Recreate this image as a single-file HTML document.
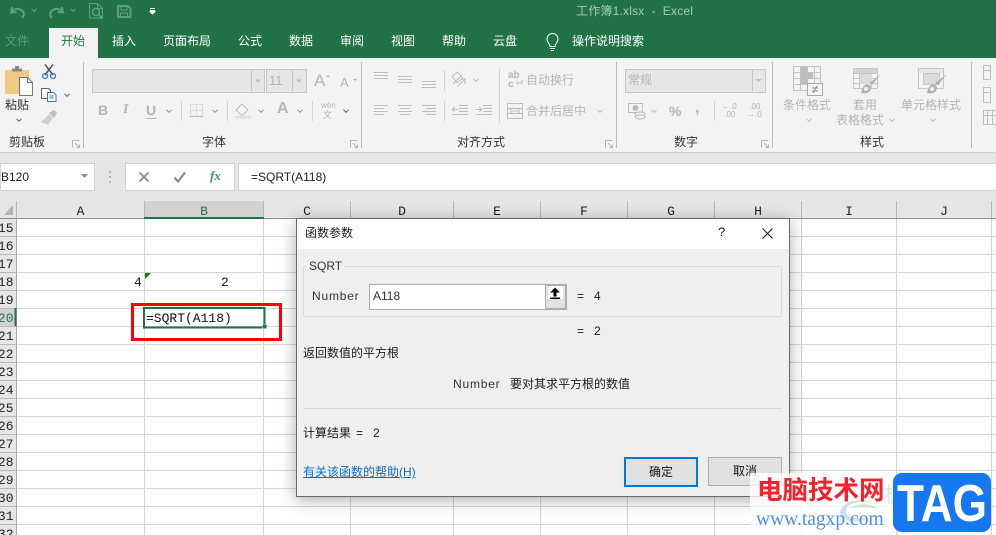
<!DOCTYPE html>
<html lang="zh"><head><meta charset="utf-8"><title>工作簿1.xlsx - Excel</title>
<style>
html,body{margin:0;padding:0;background:#fff}
#p{position:relative;width:996px;height:535px;overflow:hidden;background:#fff;font:12px/16px "Liberation Sans","Noto Sans CJK SC",sans-serif;color:#222}
#p div{position:absolute;white-space:nowrap}
.t{color:#fff;top:33px}
.g{color:#b4b4b4}
.k{color:#333}
.m{font-family:"Liberation Mono","Noto Sans CJK SC",monospace;font-size:13px;color:#111}
.h{top:201px;height:17px;line-height:22px;text-align:center;font-family:"Liberation Mono",monospace;font-size:13px;color:#222}
svg{position:absolute;left:0;top:0}
.d{color:#1a1a1a}
</style></head><body><div id="p">

<div style="left:0;top:0;width:996px;height:58px;background:#217346"></div>
<div style="left:49px;top:28px;width:49px;height:30px;background:#f3f3f3"></div>
<div style="left:0;top:58px;width:996px;height:94px;background:#f3f3f3"></div>
<div style="left:0;top:152px;width:996px;height:1px;background:#cfcfcf"></div>
<div style="left:0;top:153px;width:996px;height:48px;background:#e6e6e6"></div>

<div style="left:576px;top:3px;color:#a9c9b7;letter-spacing:.2px">工作簿1.xlsx &nbsp;- &nbsp;Excel</div>
<div class="t" style="left:5px;color:#5b9d7c">文件</div>
<div class="t" style="left:61px;color:#217346">开始</div>
<div class="t" style="left:112px">插入</div>
<div class="t" style="left:163px">页面布局</div>
<div class="t" style="left:238px">公式</div>
<div class="t" style="left:289px">数据</div>
<div class="t" style="left:340px">审阅</div>
<div class="t" style="left:391px">视图</div>
<div class="t" style="left:442px">帮助</div>
<div class="t" style="left:493px">云盘</div>
<div class="t" style="left:572px">操作说明搜索</div>

<div style="left:92px;top:69px;width:171px;height:22px;background:#e6e6e6;border:1px solid #c6c6c6"></div>
<div style="left:266px;top:69px;width:39px;height:22px;background:#e6e6e6;border:1px solid #c6c6c6"></div>
<div style="left:625px;top:69px;width:139px;height:22px;background:#e6e6e6;border:1px solid #c6c6c6"></div>
<div class="g" style="left:269px;top:73px;font-size:13px">11</div>
<div class="g" style="left:628px;top:72px">常规</div>

<div class="k" style="left:5px;top:97px">粘贴</div>
<div class="k" style="left:9px;top:134px">剪贴板</div>
<div class="k" style="left:202px;top:134px">字体</div>
<div class="k" style="left:457px;top:134px">对齐方式</div>
<div class="k" style="left:674px;top:134px">数字</div>
<div class="k" style="left:860px;top:134px">样式</div>
<div class="g" style="left:526px;top:72px">自动换行</div>
<div class="g" style="left:526px;top:103px">合并后居中</div>
<div class="g" style="left:783px;top:97px">条件格式</div>
<div class="g" style="left:853px;top:97px">套用</div>
<div class="g" style="left:836px;top:112px">表格格式</div>
<div class="g" style="left:901px;top:97px">单元格样式</div>
<div class="g" style="left:98px;top:102px;font-size:14px;font-weight:bold">B</div>
<div class="g" style="left:123px;top:102px;font-size:14px;font-weight:bold;font-style:italic;font-family:'Liberation Serif',serif">I</div>
<div class="g" style="left:146px;top:102px;font-size:14px;font-weight:bold">U</div>
<div class="g" style="left:277px;top:101px;font-size:16px;font-weight:bold">A</div>
<div class="g" style="left:314px;top:73px;font-size:17px">A</div>
<div class="g" style="left:340px;top:75px;font-size:13px">A</div>
<div class="g" style="left:321px;top:101px;font-size:8px;line-height:9px">wén</div>
<div class="g" style="left:323px;top:110px;font-size:9px;line-height:10px">文</div>
<div class="g" style="left:669px;top:103px;font-size:14px;font-weight:bold">%</div>
<div class="g" style="left:695px;top:100px;font-size:16px;font-weight:bold">,</div>
<div class="g" style="left:722px;top:103px;font-size:8px;line-height:8px">←.0<br>&nbsp;.00</div>
<div class="g" style="left:747px;top:103px;font-size:8px;line-height:8px">&nbsp;.00<br>→.0</div>
<div class="g" style="left:508px;top:71px;font-size:10px;line-height:9px;font-weight:bold">ab<br>c</div>

<div style="left:0;top:163px;width:93px;height:26px;background:#fff;border:1px solid #d2d2d2"></div>
<div style="left:125px;top:163px;width:108px;height:26px;background:#fff;border:1px solid #d2d2d2"></div>
<div style="left:238px;top:163px;width:760px;height:26px;background:#fff;border:1px solid #d2d2d2"></div>
<div style="left:1px;top:169px;color:#222">B120</div>
<div style="left:251px;top:169px;color:#222">=SQRT(A118)</div>
<div style="left:210px;top:168px;font:italic bold 13px 'Liberation Serif',serif;color:#3f8f64">fx</div>

<!-- grid -->
<div style="left:0;top:201px;width:996px;height:17px;background:#e6e6e6"></div>
<div style="left:0;top:219px;width:16px;height:316px;background:#e6e6e6"></div>
<div style="left:144px;top:201px;width:120px;height:17px;background:#d2d2d2"></div>
<div style="left:0;top:308px;width:15px;height:18px;background:#d2d2d2"></div>

<svg width="996" height="535" viewBox="0 0 996 535" fill="none">
<defs>
<path id="c" d="M-2.500-1.200 0 1.300 2.500-1.200" stroke-width="1"/>
<g id="l" stroke="#b5b5b5" stroke-width="1"><path d="M.5 7.500V.5H7.500M3 3l4.500 4.500M7.500 4.500v3h-3"/></g>
</defs>
<!-- grid lines -->
<g stroke="#d4d4d4" stroke-width="1">
<path d="M16 236.500H996M16 254.500H996M16 272.500H996M16 290.500H996M16 308.500H996M16 326.500H996M16 344.500H996M16 362.500H996M16 380.500H996M16 398.500H996M16 416.500H996M16 434.500H996M16 452.500H996M16 470.500H996M16 488.500H996M16 506.500H996M16 524.500H996"/>
<path d="M144.500 219V535M263.500 219V535M350.500 219V535M453.500 219V535M540.500 219V535M627.500 219V535M714.500 219V535M801.500 219V535M896.500 219V535M991.500 219V535"/>
</g>
<g stroke="#b8b8b8"><path d="M16.500 201V218M144.500 201V218M263.500 201V218M350.500 201V218M453.500 201V218M540.500 201V218M627.500 201V218M714.500 201V218M801.500 201V218M896.500 201V218M991.500 201V218"/>
<path d="M0 236.500H16M0 254.500H16M0 272.500H16M0 290.500H16M0 308.500H16M0 326.500H16M0 344.500H16M0 362.500H16M0 380.500H16M0 398.500H16M0 416.500H16M0 434.500H16M0 452.500H16M0 470.500H16M0 488.500H16M0 506.500H16M0 524.500H16"/></g>
<path d="M16.500 218V535" stroke="#a8a8a8"/>
<path d="M0 218.500H996" stroke="#8f8f8f"/>
<path d="M144 218H264" stroke="#217346" stroke-width="2"/>
<path d="M15.500 308V326" stroke="#217346" stroke-width="2"/>
<path d="M13 205V215H4z" fill="#b4b4b4"/>
<path d="M145 273H151L145 279z" fill="#0a7d1e"/>

<!-- QAT icons -->
<g stroke="#5f9f80" stroke-width="2">
<path d="M12 7 11 12.500l5.500-.5M11.500 12c3-4 8-4 11-1 2 2.500 1.500 5-.5 7"/>
<path d="M62 7 63 12.500l-5.500-.5M62.500 12c-3-4-8-4-11-1-2 2.500-1.500 5 .5 7"/>
</g>
<g stroke="#5f9f80" stroke-width="1"><use href="#c" x="34" y="10"/><use href="#c" x="73" y="10"/>
<path d="M89.500 3.500h8l5 5v9.500H89.500zM97.500 3.500v5h5"/><circle cx="96" cy="12" r="3.500" stroke-width="1.500"/><path d="M98.500 14.500l4 4" stroke-width="2"/></g>
<path d="M118 6h10l2.500 2.500V17H118z" stroke="#5f9f80" stroke-width="2"/><path d="M121 6v4h6V6M120.500 17v-4h7v4" stroke="#5f9f80"/>
<path d="M150 8.500h5M150 10.500h5M150 11.500l2.500 2.500 2.500-2.500z" stroke="#fff" fill="#fff"/>
<!-- bulb -->
<g stroke="#fff"><path d="M550 46.500c0-3-3-4-3-7.500a5.500 5.500 0 0 1 11 0c0 3.500-3 4.500-3 7.500z"/><path d="M550 48.500h5M551 50.500h3"/></g>

<!-- separators -->
<g stroke="#bdbdbd"><path d="M83.500 62V148M361.500 62V148M616.500 62V148M772.500 62V148M971.500 62V148"/></g>
<g stroke="#d4d4d4"><path d="M181.500 101V121M227.500 101V121M312.500 101V121M444.500 70V91M444.500 101V121M499.500 68V123M714.500 101V121"/></g>
<!-- combo arrows -->
<path d="M251.500 70V91M292.500 70V91M752.500 70V91" stroke="#c6c6c6"/>
<path d="M255 79.500h6l-3 3zM296 79.500h6l-3 3zM755.500 79h6l-3 3z" fill="#bdbdbd"/>

<!-- paste -->
<path d="M5 70h24v24H5z" fill="#f0c982" />
<path d="M12 68.500h10v3H12z" fill="#8a8a8a"/><path d="M15 66h4v3h-4z" fill="#8a8a8a"/>
<path d="M19.500 77.500h8l5 5v13h-13z" fill="#fff" stroke="#777"/><path d="M27.500 77.500v5h5" stroke="#777"/>
<!-- scissors -->
<path d="M45 64.500 53 75M53 64.500 45 75" stroke="#555" stroke-width="1.500"/>
<circle cx="45" cy="76" r="2.500" stroke="#3c78c3" stroke-width="1.300"/><circle cx="53" cy="76" r="2.500" stroke="#3c78c3" stroke-width="1.300"/>
<!-- copy -->
<path d="M41.500 88.500h7l2 2v8h-9z" stroke="#666" fill="#fff"/><path d="M47.500 92.500h6l2.500 2.500v6.500h-8.500z" stroke="#3c78c3" fill="#fff"/><path d="M49.500 96h4M49.500 98h4" stroke="#3c78c3"/>
<!-- painter -->
<path d="M41 122l8-8 4 4-5 7z" fill="#cfcfcf"/><path d="M49 113l5-3 3 3-3 5z" fill="#bdbdbd"/>
<g stroke="#555"><use href="#c" x="67" y="95"/><use href="#c" x="19" y="120"/></g>
<g stroke="#8c8c8c"><use href="#c" x="169" y="111"/><use href="#c" x="215" y="111"/><use href="#c" x="261" y="111"/><use href="#c" x="300" y="111"/></g>
<g stroke="#555"><use href="#c" x="346" y="111"/></g>
<use href="#l" x="72" y="140"/><use href="#l" x="350" y="140"/><use href="#l" x="605" y="140"/><use href="#l" x="761" y="140"/>

<!-- font rows -->
<path d="M326 77l2-2 2 2zM353 79l2 2 2-2z" fill="#b4b4b4"/>
<path d="M146.500 118.500h10" stroke="#b4b4b4"/>
<path d="M190.500 104.500h12v12h-12zM190.500 110.500h12M196.500 104.500v12" stroke="#c4c4c4" stroke-dasharray="1 1"/><path d="M190 116.500h13" stroke="#b4b4b4"/>
<path d="M236 110l6-6 6 6-5 5h-2z" stroke="#bdbdbd"/><path d="M235 116h16v2.500h-16z" fill="#e2dcdc"/><path d="M242 104l5 5" stroke="#bdbdbd"/>
<!-- align -->
<g stroke="#bdbdbd">
<path d="M374 72.500h14M374 75.500h14M374 78.500h14M398 76.500h14M398 79.500h14M398 82.500h14M422 81.500h14M422 84.500h14M422 87.500h14"/>
<path d="M374 105.500h14M374 108.500h10M374 111.500h14M374 114.500h10M398 105.500h14M400 108.500h10M398 111.500h14M400 114.500h10M422 105.500h14M426 108.500h10M422 111.500h14M426 114.500h10"/>
<path d="M459 105.500h9M459 108.500h9M459 111.500h9M452 114.500h16M452 109.500h6M452 109.500l3-2.500M452 109.500l3 2.500M483 105.500h9M483 108.500h9M483 111.500h9M476 114.500h16M476 109.500h6M482 109.500l-3-2.500M482 109.500l-3 2.500"/>
<path d="M453 84l9-9M458 86l7-7M465 79v5M465 79h-4"/><rect x="453.500" y="73.500" width="7" height="8" transform="rotate(-40 457 77)"/>
<path d="M507.500 103.500h15v15h-15zM507.500 108.500h15M507.500 113.500h15M512 111h6M511 109v4M519 109v4" />
<path d="M518 83h4v-3M516.500 83l1.500-1.500M516.500 83l1.500 1.500"/>
</g>
<g stroke="#bdbdbd"><use href="#c" x="476" y="80"/><use href="#c" x="600" y="111"/><use href="#c" x="654" y="111"/><use href="#c" x="809" y="120"/><use href="#c" x="892" y="120"/><use href="#c" x="933" y="120"/></g>
<!-- currency -->
<path d="M628.500 103.500h14v9h-14z" stroke="#bdbdbd" fill="#f3f3f3"/><circle cx="635.500" cy="108" r="3" fill="#bdbdbd"/><ellipse cx="640" cy="114" rx="5" ry="2" fill="#f3f3f3" stroke="#bdbdbd"/><ellipse cx="640" cy="117" rx="5" ry="2" fill="#f3f3f3" stroke="#bdbdbd"/>
<!-- cond format -->
<g stroke="#c2c2c2"><path d="M793.500 66.500h27v24h-27zM793.500 72.500h27M793.500 78.500h27M793.500 84.500h27M800.500 66.500v24M807.500 66.500v24M814.500 66.500v24"/></g>
<path d="M801 67h6v6h6v6h-6v5h-7z" fill="#bdbdbd"/><path d="M807.500 83.500h15v12h-15z" fill="#f3f3f3" stroke="#a8a8a8"/><path d="M812 88h6M812 91h6M817 86l-4 7" stroke="#8c8c8c"/>
<!-- table format -->
<g stroke="#c6c6c6"><path d="M853.500 68.500h24v20h-24zM853.500 73.500h24M853.500 78.500h24M853.500 83.500h24M859.500 68.500v20M865.500 68.500v20M871.500 68.500v20"/></g>
<path d="M854 69h23v4h-23z" fill="#d4d4d4"/><path d="M860 74h12v10h-12z" fill="#dcdcdc"/>
<path d="M881 74l-9 11-3-2z" fill="#b4b4b4"/><path d="M870 85c-4-2-8 1-9 8 5 1 10 0 10-6z" fill="#b4b4b4"/><circle cx="866" cy="89" r="2" fill="#f3f3f3"/>
<!-- cell style -->
<path d="M918.500 68.500h25v20h-25z" stroke="#c6c6c6"/><path d="M919 69h24v4h-24z" fill="#e6e6e6"/><path d="M923.500 73.500h16v11h-16z" fill="#dcdcdc" stroke="#c6c6c6"/>
<path d="M947 74l-9 11-3-2z" fill="#b4b4b4"/><path d="M936 85c-4-2-8 1-9 8 5 1 10 0 10-6z" fill="#b4b4b4"/><circle cx="932" cy="89" r="2" fill="#f3f3f3"/>
<!-- right clipped -->
<g stroke="#bdbdbd"><path d="M983.500 65.500h7v5h-7zM983.500 70.500h7v9h-7zM983.500 87.500h7v5h-7zM983.500 92.500h7v10h-7zM983.500 110.500h13v5h-13zM983.500 115.500h13v9h-13zM987.500 110.500v14M992.500 110.500v14"/></g>
<!-- formula bar glyphs -->
<path d="M81 174h7l-3.500 4z" fill="#8a8a8a"/>
<path d="M109 171h2v2h-2zM109 176h2v2h-2zM109 181h2v2h-2z" fill="#b5b5b5"/>
<path d="M139.500 172.500l9 9M148.500 172.500l-9 9" stroke="#8a8a8a" stroke-width="1.800"/>
<path d="M174.500 177.500l3.500 4 7-9" stroke="#8a8a8a" stroke-width="2.200"/>
<!-- selection -->
<rect x="144" y="308" width="120.500" height="19.500" stroke="#217346" stroke-width="2"/>
<path d="M262 324h5v5h-5z" fill="#fff"/><path d="M262.500 324.500h4v4h-4z" fill="#217346"/>
<rect x="132.500" y="304.500" width="148" height="35" stroke="#fe0000" stroke-width="3"/>
</svg>

<div class="h" style="left:17px;width:127px">A</div>
<div class="h" style="left:145px;width:118px;color:#217346">B</div>
<div class="h" style="left:264px;width:86px">C</div>
<div class="h" style="left:351px;width:102px">D</div>
<div class="h" style="left:454px;width:86px">E</div>
<div class="h" style="left:541px;width:86px">F</div>
<div class="h" style="left:628px;width:86px">G</div>
<div class="h" style="left:715px;width:86px">H</div>
<div class="h" style="left:802px;width:94px">I</div>
<div class="h" style="left:897px;width:94px">J</div>

<div class="m" style="left:-10px;top:220px;width:23.500px;height:315px;overflow:hidden;text-align:right;line-height:18px;color:#222">15<br>16<br>17<br>18<br>19<br><span style="color:#217346">20</span><br>21<br>22<br>23<br>24<br>25<br>26<br>27<br>28<br>29<br>30<br>31<br>32</div>

<div class="m" style="left:134px;top:274px;line-height:18px">4</div>
<div class="m" style="left:221px;top:274px;line-height:18px">2</div>
<div class="m" style="left:146px;top:310px;line-height:18px">=SQRT(A118)</div>

<!-- dialog -->
<div style="left:296px;top:218px;width:492px;height:277px;background:#efefef;border:1px solid #6a6a6a;box-shadow:0 3px 16px rgba(0,0,0,.32)">
  <div style="left:0;top:0;width:492px;height:30px;background:#fff"></div>
  <div class="d" style="left:8px;top:6px">函数参数</div>
  <div class="d" style="left:421px;top:6px;font:13px/16px 'Liberation Mono',monospace">?</div>
  <div style="left:6px;top:47px;width:477px;height:49px;border:1px solid #d9d9d9"></div>
  <div class="d" style="left:10px;top:39px;background:#efefef;padding:0 2px;color:#333">SQRT</div>
  <div class="d" style="left:15px;top:69px;letter-spacing:.8px;color:#333">Number</div>
  <div style="left:72px;top:65px;width:175px;height:24px;background:#fff;border:1px solid #adadad"></div>
  <div class="d" style="left:76px;top:69px;color:#333">A118</div>
  <div style="left:248px;top:65px;width:19px;height:22px;background:#e1e1e1;border:2px solid #adadad;border-left:1px solid #adadad"></div>
  <div style="left:251px;top:67px;width:15px;height:13px;background:#fff"></div>
  <div class="d" style="left:280px;top:69px">=</div><div class="d" style="left:297px;top:69px">4</div>
  <div class="d" style="left:280px;top:104px">=</div><div class="d" style="left:297px;top:104px">2</div>
  <div class="d" style="left:6px;top:126px">返回数值的平方根</div>
  <div class="d" style="left:156px;top:157px;letter-spacing:.8px;color:#333">Number</div>
  <div class="d" style="left:213px;top:157px">要对其求平方根的数值</div>
  <div style="left:6px;top:189px;width:479px;height:1px;background:#d9d9d9"></div>
  <div class="d" style="left:6px;top:206px">计算结果</div>
  <div class="d" style="left:59px;top:206px">=</div>
  <div class="d" style="left:76px;top:206px">2</div>
  <div style="left:6px;top:245px;color:#0b6cc9;text-decoration:underline">有关该函数的帮助(H)</div>
  <div style="left:327px;top:238px;width:70px;height:26px;background:#e1e1e1;border:2px solid #0078d7;text-align:center;line-height:26px;color:#111">确定</div>
  <div style="left:411px;top:238px;width:72px;height:27px;background:#e1e1e1;border:1px solid #adadad;text-align:center;line-height:27px;color:#111">取消</div>
  <svg width="492" height="277" viewBox="0 0 492 277" fill="none" style="pointer-events:none">
    <path d="M465.500 9.500l10 10M475.500 9.500l-10 10" stroke="#222" stroke-width="1.100"/>
    <path d="M253 69l5-1 0 0zM258 68.500l-5 5h3.500v4h3v-4H263zM253 78.500h10v1.500H253z" fill="#000"/>
  </svg>
</div>

<!-- watermark -->
<div style="left:750px;top:473px;width:146px;height:62px;background:rgba(255,255,255,.78)"></div>
<div style="left:884px;top:484px;font-size:21px;line-height:24px;color:#8fb6e0;opacity:.35">极光下载站</div>
<svg width="996" height="535" viewBox="0 0 996 535" fill="none">
<path d="M840 512c2-10 18-15 30-9-8-2-24-1-24 8 0 8 14 9 24 5-8 8-28 8-30-4z" fill="#b7d3ea" opacity=".7"/>
<path d="M850 508c8-5 22-5 28 1-6-2-18-2-28-1z" fill="#bfe0b0" opacity=".7"/>
<rect x="893" y="473" width="98" height="59" rx="9" fill="#1677f2"/>
<text x="897" y="521" font-family="Liberation Sans" font-weight="bold" font-size="52" fill="#fff" textLength="90" lengthAdjust="spacingAndGlyphs">TAG</text>
</svg>
<div style="left:757px;top:476px;font:bold 25.500px/30px 'Liberation Sans','Noto Sans CJK SC',sans-serif;color:#f5222d">电脑技术网</div>
<div style="left:756px;top:508px;font:19.500px/24px 'Liberation Serif',serif;color:#4a8df0">www.tagxp.com</div>
</div></body></html>
